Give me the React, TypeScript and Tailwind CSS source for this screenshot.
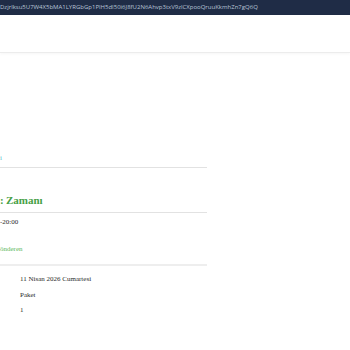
import React from "react";

export default function App() {
  const serif = { fontFamily: '"Liberation Serif", "Times New Roman", serif' };
  return (
    <div className="w-[350px] h-[350px] bg-white overflow-hidden" style={serif}>
      <div
        className="h-[15px] bg-[#1f2c46] text-[#b9c4d6] text-[6px] leading-[15px] whitespace-nowrap overflow-hidden"
        style={{ fontFamily: '"Open Sans", "Noto Sans", sans-serif' }}
      >
        Dzjrlksu5U7W4X5bMA1LYRGbGp1PlH5dI50i6J8fU2N6Ahvp3txV9zlCXpooQruuKkmhZn7gQ6Q
      </div>
      <div className="h-[38px] bg-white border-b border-[#ececec] shadow-[0_1px_3px_rgba(0,0,0,0.04)]" />
      <div className="w-[207px]">
        <div className="mt-[100px] pb-[4px] border-b border-[#e2e2e2]">
          <div className="h-[10px] text-[7px] leading-[10px] text-[#5bbfcf]">i</div>
        </div>
        <div className="mt-[24px] pb-[4px] border-b border-[#e2e2e2]">
          <div className="h-[16px] text-[11px] leading-[16px] font-bold text-[#46a046] whitespace-nowrap">
            :{"\u2009"}Zamanı
          </div>
        </div>
        <div className="mt-[4px] h-[10px] text-[7px] leading-[10px] text-[#2a2a2a] whitespace-nowrap">-20:00</div>
        <div className="mt-[17px] pb-[10px] border-b-2 border-[#eeeeee]">
          <div className="h-[10px] text-[7px] leading-[10px] text-[#5cb85c] whitespace-nowrap">önderen</div>
        </div>
        <div className="pl-[20px] text-[7px] leading-[10px] text-[#2a2a2a]">
          <div className="mt-[8px] h-[10px] whitespace-nowrap">11 Nisan 2026 Cumartesi</div>
          <div className="mt-[6px] h-[10px]">Paket</div>
          <div className="mt-[5px] h-[10px]">1</div>
        </div>
      </div>
    </div>
  );
}
